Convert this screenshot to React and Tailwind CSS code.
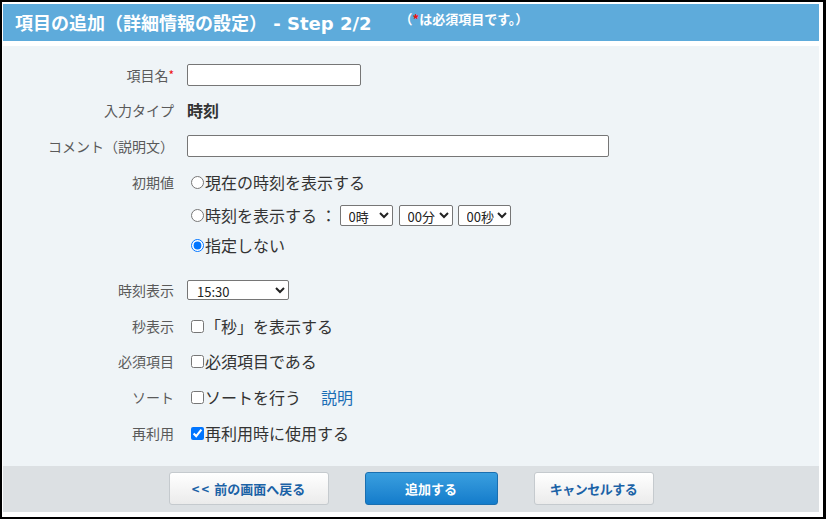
import React from "react";

const font = { fontFamily: '"Noto Sans CJK JP", "Noto Sans", sans-serif' };

function Row({ label, children, className = "", top = false }) {
	return (
		<div className={`flex ${top ? "items-start" : "items-center"} ${className}`}>
			<div className="w-[171px] shrink-0 text-right text-[14px] leading-[22px] text-[#5a5a5a]">
				{label}
			</div>
			<div className="ml-[13px] flex-1">{children}</div>
		</div>
	);
}

function Select({ value, className }) {
	return (
		<select
			defaultValue={value}
			className={`border border-[#767676] rounded-[2px] bg-white text-[13px] text-[#222] pl-[4px] ${className}`}
		>
			<option>{value}</option>
		</select>
	);
}

export default function App() {
	return (
		<div
			style={font}
			className="w-[826px] h-[519px] bg-white border-l-2 border-t-2 border-b-2 border-r-[3px] border-black pl-px pt-[2px] pr-[4px] pb-[5px] flex flex-col"
		>
			{/* header */}
			<div className="h-[37px] shrink-0 bg-[#5eabdb] flex items-center pl-[12px] text-white font-bold">
				<span className="text-[18px] leading-none">
					項目の追加（詳細情報の設定）
					<span className="font-['DejaVu_Sans',sans-serif]"> - Step 2/2</span>
				</span>
				<span className="ml-[28px] mb-[9px] text-[13px] leading-none">
					（<span className="text-[#ee1111]">*</span>は必須項目です。）
				</span>
			</div>

			{/* body */}
			<div className="mt-[5px] h-[420px] shrink-0 bg-[#eff4f7] pt-[18px] text-[16px] text-[#333]">
				<Row
					label={
						<>
							項目名<span className="text-[#ee1111] text-[12px] align-top">*</span>
						</>
					}
					className="h-[22px]"
				>
					<input
						type="text"
						className="w-[174px] h-[22px] border border-[#767676] rounded-[2px] bg-white"
					/>
				</Row>

				<Row label="入力タイプ" className="h-[22px] mt-[13px]">
					<span className="font-bold leading-[22px] text-[#333]">時刻</span>
				</Row>

				<Row label="コメント（説明文）" className="h-[22px] mt-[14px]">
					<input
						type="text"
						className="w-[422px] h-[22px] border border-[#767676] rounded-[2px] bg-white"
					/>
				</Row>

				<Row label="初期値" className="mt-[14px]" top>
					<div className="flex flex-col">
						<label className="h-[22px] flex items-center">
							<input type="radio" name="init" className="ml-[4px] mr-[1px] w-[13px] h-[13px]" />
							現在の時刻を表示する
						</label>
						<label className="h-[22px] mt-[11px] flex items-center">
							<input type="radio" name="init" className="ml-[4px] mr-[1px] w-[13px] h-[13px]" />
							時刻を表示する ：
							<Select value="0時" className="ml-[3px] w-[53px] h-[21px]" />
							<Select value="00分" className="ml-[6px] w-[54px] h-[21px]" />
							<Select value="00秒" className="ml-[5px] w-[53px] h-[21px]" />
						</label>
						<label className="h-[22px] mt-[8px] flex items-center">
							<input
								type="radio"
								name="init"
								defaultChecked
								className="ml-[4px] mr-[1px] w-[13px] h-[13px]"
							/>
							指定しない
						</label>
					</div>
				</Row>

				<Row label="時刻表示" className="h-[22px] mt-[23px]">
					<Select value="15:30" className="w-[102px] h-[20px] pl-[5px]" />
				</Row>

				<Row label="秒表示" className="h-[22px] mt-[14px]">
					<label className="flex items-center">
						<input type="checkbox" className="ml-[4px] mr-[1px] w-[13px] h-[13px]" />
						「秒」を表示する
					</label>
				</Row>

				<Row label="必須項目" className="h-[22px] mt-[13px]">
					<label className="flex items-center">
						<input type="checkbox" className="ml-[4px] mr-[1px] w-[13px] h-[13px]" />
						必須項目である
					</label>
				</Row>

				<Row label="ソート" className="h-[22px] mt-[14px]">
					<label className="flex items-center">
						<input type="checkbox" className="ml-[4px] mr-[1px] w-[13px] h-[13px]" />
						ソートを行う
						<a href="#" className="ml-[20px] text-[#1a6db5]">説明</a>
					</label>
				</Row>

				<Row label="再利用" className="h-[22px] mt-[14px]">
					<label className="flex items-center">
						<input
							type="checkbox"
							defaultChecked
							className="ml-[4px] mr-[1px] w-[13px] h-[13px]"
						/>
						再利用時に使用する
					</label>
				</Row>
			</div>

			{/* footer */}
			<div className="h-[46px] shrink-0 bg-[#dce0e3] flex items-center justify-center gap-[36px] pb-[1px]">
				<button className="w-[160px] h-[33px] rounded-[3px] border border-[#c5cace] bg-gradient-to-b from-white to-[#ebebeb] text-[13px] font-bold text-[#1b62a6]">
					<span className="tracking-[2px]">&lt;&lt;</span> 前の画面へ戻る
				</button>
				<button className="w-[133px] h-[33px] rounded-[3px] border border-[#1a6fb0] bg-gradient-to-b from-[#399fdf] to-[#137ccb] text-[13px] font-bold text-white">
					追加する
				</button>
				<button className="w-[120px] h-[33px] rounded-[3px] border border-[#c5cace] bg-gradient-to-b from-white to-[#ebebeb] text-[13px] font-bold text-[#1b62a6] tracking-[-0.5px]">
					キャンセルする
				</button>
			</div>
		</div>
	);
}
